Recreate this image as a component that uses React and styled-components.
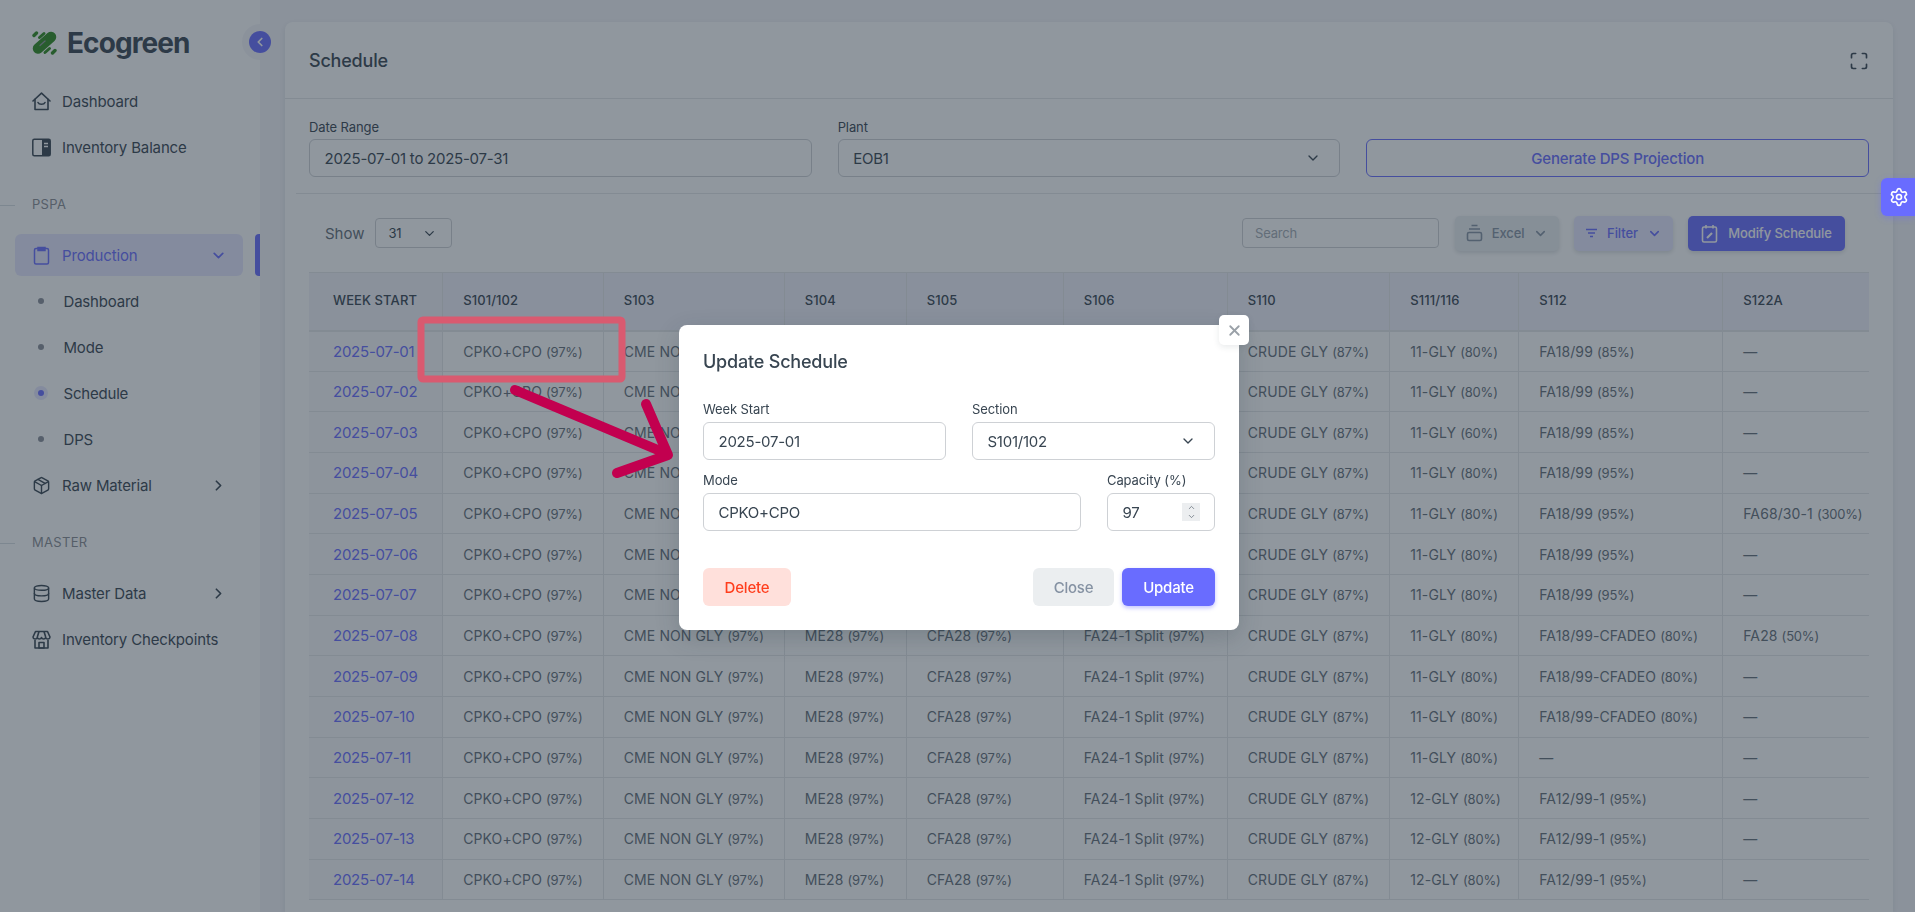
import React from 'react';
import styled, { createGlobalStyle } from 'styled-components';
import { ChevronDown, ChevronRight, ChevronLeft, ChevronUp, X, Settings, Package, Database, Maximize } from 'lucide-react';

const GlobalStyle = createGlobalStyle`
  html, body {
    margin: 0;
    height: 912px;
    overflow: hidden;
    background: #f5f5f9;
    font-family: Inter, "Noto Sans", sans-serif;
    color: #384551;
  }
  * {
    box-sizing: border-box;
  }
`;

const Page = styled.div`
  display: flex;
  width: 1915px;
  height: 912px;
  overflow: hidden;
`;

const Sidebar = styled.aside`
  position: relative;
  width: 260px;
  flex: none;
  background: #fff;
  padding-top: 28px;
`;

const Brand = styled.div`
  display: flex;
  align-items: center;
  gap: 10px;
  height: 29px;
  padding-left: 32px;
  font-size: 28px;
  font-weight: 700;
  letter-spacing: -0.9px;
  color: #384551;
`;

const Toggle = styled.div`
  position: absolute;
  left: 249px;
  top: 31px;
  width: 22px;
  height: 22px;
  border-radius: 50%;
  background: #696cff;
  color: #fff;
  display: flex;
  align-items: center;
  justify-content: center;
  box-shadow: 0 0 0 7px #f5f5f9;
`;

const Menu = styled.nav`
  padding-top: 23px;
  display: flex;
  flex-direction: column;
`;

const Item = styled.div`
  position: relative;
  display: flex;
  align-items: center;
  height: 42px;
  margin: 0 17px 4px 15px;
  padding: 0 16px 0 17px;
  border-radius: 6px;
  font-size: 15px;
  letter-spacing: -0.15px;
  color: ${(p) => (p.$active ? '#696cff' : '#384551')};
  background: ${(p) => (p.$active ? 'rgba(105,108,255,.16)' : 'transparent')};
  svg.lead {
    flex: none;
    margin-right: 11px;
  }
  svg.tail {
    margin-left: auto;
  }
  ${(p) =>
    p.$active &&
    `&::after {
      content: '';
      position: absolute;
      left: 240px;
      top: 0;
      width: 5px;
      height: 42px;
      border-radius: 4px 0 0 4px;
      background: #696cff;
    }`}
`;

const SubItem = styled.div`
  display: flex;
  align-items: center;
  height: 42px;
  margin-bottom: 4px;
  padding-left: 38px;
  font-size: 15px;
  letter-spacing: -0.2px;
  color: #384551;
`;

const Bullet = styled.span`
  width: 6px;
  height: 6px;
  margin-right: 19.5px;
  border-radius: 50%;
  background: ${(p) => (p.$active ? '#696cff' : '#8a8f99')};
  box-shadow: ${(p) => (p.$active ? '0 0 0 4px rgba(105,108,255,.16)' : 'none')};
`;

const SectionLabel = styled.div`
  position: relative;
  height: 20px;
  margin: 22px 0 20px;
  padding-left: 32px;
  font-size: 13px;
  line-height: 20px;
  letter-spacing: 0.3px;
  color: #8a8d93;
  &::before {
    content: '';
    position: absolute;
    left: 0;
    top: 11px;
    width: 15px;
    height: 1px;
    background: #d9dee3;
  }
`;

const Main = styled.main`
  flex: 1;
  min-width: 0;
  padding: 22px 22px 0 25px;
`;

const Card = styled.section`
  background: #fff;
  border-radius: 8px 8px 0 0;
  height: 890px;
  box-shadow: 0 2px 6px rgba(34, 48, 62, 0.1);
`;

const CardHeader = styled.header`
  display: flex;
  align-items: center;
  justify-content: space-between;
  height: 77px;
  padding: 1px 24px 0 24px;
  border-bottom: 1px solid #e4e6e8;
`;

const Title = styled.h5`
  margin: 0;
  font-size: 18px;
  font-weight: 500;
  letter-spacing: -0.2px;
`;

const FormRow = styled.div`
  display: grid;
  grid-template-columns: repeat(3, 1fr);
  gap: 26px;
  align-items: end;
  padding: 19px 24px 16px;
`;

const Field = styled.label`
  display: flex;
  flex-direction: column;
  gap: ${(p) => p.$gap || 3}px;
  min-width: 0;
`;

const FieldLabel = styled.span`
  font-size: 13px;
  line-height: 18px;
  letter-spacing: -0.1px;
  color: #384551;
`;

const Control = styled.div`
  display: flex;
  align-items: center;
  justify-content: space-between;
  height: 38px;
  padding: 0 ${(p) => (p.$select ? 18 : 14)}px 0 14.5px;
  border: 1px solid #ced1d5;
  border-radius: 6px;
  background: #fff;
  font-size: 15px;
  letter-spacing: -0.25px;
  color: #384551;
`;

const OutlineButton = styled.div`
  display: flex;
  align-items: center;
  justify-content: center;
  height: 38px;
  border: 1px solid #696cff;
  border-radius: 6px;
  color: #696cff;
  font-size: 15px;
  font-weight: 500;
  letter-spacing: -0.15px;
`;

const Divider = styled.div`
  height: 1px;
  margin-left: 11px;
  background: #e4e6e8;
`;

const Toolbar = styled.div`
  display: flex;
  align-items: center;
  height: 78px;
  padding: 0 48px 0 40px;
`;

const ShowLabel = styled.span`
  font-size: 15px;
  color: #646e78;
  margin-right: 10px;
`;

const SmallSelect = styled.div`
  display: flex;
  align-items: center;
  justify-content: space-between;
  width: 77px;
  height: 30px;
  padding: 0 14px 0 13px;
  border: 1px solid #ced1d5;
  border-radius: 4px;
  font-size: 13px;
  letter-spacing: -0.2px;
`;

const SearchBox = styled.div`
  display: flex;
  align-items: center;
  width: 197px;
  height: 30px;
  margin-left: auto;
  padding: 0 12px;
  border: 1px solid #ced1d5;
  border-radius: 4px;
  font-size: 13px;
  letter-spacing: -0.2px;
  color: #a4abb3;
`;

const ToolButton = styled.div`
  display: flex;
  align-items: center;
  justify-content: center;
  height: 35px;
  width: ${(p) => p.$width}px;
  margin-left: ${(p) => p.$gap}px;
  gap: ${(p) => p.$inner || 9}px;
  border-radius: 5px;
  font-size: 13px;
  font-weight: 500;
  letter-spacing: -0.1px;
  color: ${(p) => p.$color};
  background: ${(p) => p.$bg};
  box-shadow: 0 2px 4px rgba(34, 48, 62, 0.16);
`;

const TableWrap = styled.div`
  padding: 0 24px;
`;

const Table = styled.table`
  width: 1560px;
  table-layout: fixed;
  border-collapse: collapse;
  font-size: 14px;
  letter-spacing: 0.1px;
  color: #646e78;
`;

const Th = styled.th`
  height: 58px;
  padding: 0 0 3px ${(p) => (p.$first ? 24 : 20)}px;
  text-align: left;
  font-size: 13px;
  font-weight: 500;
  letter-spacing: 0.1px;
  color: #384551;
  background: ${(p) => (p.$first ? '#f2f2f8' : '#f1f1fb')};
  border-top: 1px solid #e4e6e8;
  border-bottom: 2px solid #e4e6e8;
  border-right: 1px solid #e4e6e8;
  &:last-child {
    border-right: 0;
  }
`;

const Td = styled.td`
  height: 40.67px;
  padding: 0 0 0 ${(p) => (p.$first ? 24 : 20)}px;
  white-space: nowrap;
  overflow: hidden;
  border-bottom: 1px solid #e4e6e8;
  border-right: 1px solid #e4e6e8;
  background: ${(p) => (p.$first ? '#f9f9fb' : '#fff')};
  &:last-child {
    border-right: 0;
  }
`;

const DateLink = styled.a`
  color: #696cff;
  font-size: 15px;
  letter-spacing: -0.25px;
`;

const Pct = styled.small`
  font-size: 13px;
  letter-spacing: -0.2px;
`;

const SettingsTab = styled.div`
  position: fixed;
  z-index: 30;
  right: 0;
  top: 178px;
  width: 34px;
  height: 38px;
  padding-left: 2px;
  display: flex;
  align-items: center;
  justify-content: center;
  color: #fff;
  background: #696cff;
  border-radius: 6px 0 0 6px;
  box-shadow: 0 2px 6px rgba(105, 108, 255, 0.4);
`;

const Backdrop = styled.div`
  position: fixed;
  inset: 0;
  z-index: 10;
  background: #22303e;
  opacity: 0.5;
`;

const ModalLayer = styled.div`
  position: fixed;
  inset: 0;
  z-index: 20;
  display: flex;
  justify-content: center;
  padding: 325px 0 0 3px;
`;

const Modal = styled.div`
  position: relative;
  width: 560px;
  height: 305px;
  padding: 24px;
  background: #fff;
  border-radius: 8px;
  box-shadow: 0 8px 24px rgba(34, 48, 62, 0.2);
`;

const CloseX = styled.div`
  position: absolute;
  right: -10px;
  top: -10px;
  width: 30px;
  height: 30px;
  display: flex;
  align-items: center;
  justify-content: center;
  color: #9aa1a8;
  background: #fff;
  border-radius: 5px;
  box-shadow: 0 2px 6px rgba(34, 48, 62, 0.1);
`;

const ModalTitle = styled.h5`
  margin: 0 0 25px;
  height: 26px;
  font-size: 18px;
  line-height: 26px;
  font-weight: 500;
  letter-spacing: -0.2px;
`;

const ModalRow = styled.div`
  display: grid;
  grid-template-columns: ${(p) => p.$cols};
  gap: 26px;
  margin-bottom: 11px;
`;

const Spinner = styled.span`
  display: flex;
  flex-direction: column;
  align-items: center;
  width: 18px;
  height: 18px;
  background: #eceef0;
  color: #646e78;
`;

const ModalFooter = styled.div`
  display: flex;
  align-items: center;
  gap: 8px;
  margin-top: 37px;
`;

const ModalButton = styled.div`
  display: flex;
  align-items: center;
  justify-content: center;
  width: ${(p) => p.$width}px;
  height: 38px;
  margin-right: ${(p) => (p.$push ? 'auto' : 0)};
  border-radius: 6px;
  font-size: 15px;
  font-weight: 500;
  letter-spacing: -0.2px;
  color: ${(p) => p.$color};
  background: ${(p) => p.$bg};
  box-shadow: ${(p) => p.$shadow || 'none'};
`;

const Annotation = styled.svg`
  position: fixed;
  z-index: 25;
  left: 0;
  top: 0;
  width: 1915px;
  height: 912px;
  pointer-events: none;
`;

const HomeIcon = () => (
  <svg className="lead" width="19" height="19" viewBox="0 0 19 19" fill="none" stroke="currentColor" strokeWidth="1.6" strokeLinejoin="round" strokeLinecap="round">
    <path d="M1 9 9.5 1.2 18 9" />
    <path d="M3 7.2V17.5h13V7.2" />
    <path d="M6 10.5c1 2.4 6 2.4 7 0" />
  </svg>
);

const BookIcon = () => (
  <svg className="lead" width="19" height="19" viewBox="0 0 19 19">
    <rect x="0.8" y="1.2" width="17.4" height="16.6" rx="1.5" fill="none" stroke="currentColor" strokeWidth="1.5" />
    <rect x="10" y="1.5" width="8" height="16" fill="currentColor" />
    <path d="M12 5.5h4M12 8.5h4" stroke="#fff" strokeWidth="1.3" />
  </svg>
);

const ClipIcon = () => (
  <svg className="lead" width="19" height="19" viewBox="0 0 19 19" fill="none" stroke="currentColor" strokeWidth="1.5">
    <rect x="2.5" y="2.5" width="14" height="15.5" rx="1.5" />
    <path d="M6 1.5h7v3H6z" fill="currentColor" />
  </svg>
);

const StoreIcon = () => (
  <svg className="lead" width="19" height="19" viewBox="0 0 19 19" fill="none" stroke="currentColor" strokeWidth="1.6" strokeLinejoin="round">
    <path d="M3.5 1.5h12l2.5 5.5a2.2 2.2 0 0 1-4.3.5 2.2 2.2 0 0 1-4.2 0 2.2 2.2 0 0 1-4.2 0A2.2 2.2 0 0 1 1 7z" />
    <path d="M7 1.5 5.3 7M12 1.5 13.7 7" />
    <path d="M3 10v8h13v-8" />
    <rect x="7" y="12.5" width="5" height="5.5" />
  </svg>
);

const LogoMark = () => (
  <svg width="25" height="24" viewBox="0 0 25 24" style={{ flex: 'none' }} fill="none" stroke="#2e8b1e" strokeLinecap="round">
    <path d="M6 17.5 19 6" strokeWidth="10.5" />
    <path d="M2 4.5 4.5 2" strokeWidth="3.4" />
    <path d="M7.5 6.5 12 2.5" strokeWidth="3" />
    <path d="M13 21.5 17.5 17.5" strokeWidth="3" />
    <path d="M20.5 22 23 19.5" strokeWidth="3.4" />
    <path d="M8 14.5 13 10" stroke="#8f969d" strokeWidth="1.2" />
  </svg>
);

const ExcelIcon = () => (
  <svg width="17" height="18" viewBox="0 0 17 18" fill="none" stroke="currentColor" strokeWidth="1.6">
    <path d="M5.5 1.5h6M3 5h11" />
    <rect x="1.5" y="8.5" width="14" height="8" rx="1.5" />
  </svg>
);

const ModifyIcon = () => (
  <svg width="17" height="19" viewBox="0 0 17 19" fill="none" stroke="currentColor" strokeWidth="1.6">
    <rect x="1.5" y="3" width="14" height="15" rx="1.5" />
    <path d="M5 1v3.5M12 1v3.5" />
    <path d="M6 14 11 9" strokeWidth="2.2" />
  </svg>
);

const columns = [
  { name: 'WEEK START', w: 133.7 },
  { name: 'S101/102', w: 160.6 },
  { name: 'S103', w: 181 },
  { name: 'S104', w: 122 },
  { name: 'S105', w: 157 },
  { name: 'S106', w: 164 },
  { name: 'S110', w: 162.5 },
  { name: 'S111/116', w: 129 },
  { name: 'S112', w: 204 },
  { name: 'S122A', w: 146.2 },
];

const gly = (day) => {
  if (day === 3) return ['11-GLY', '60%'];
  return day >= 12 ? ['12-GLY', '80%'] : ['11-GLY', '80%'];
};

const fa = (day) => {
  if (day <= 3) return ['FA18/99', '85%'];
  if (day <= 7) return ['FA18/99', '95%'];
  if (day <= 10) return ['FA18/99-CFADEO', '80%'];
  if (day === 11) return null;
  if (day <= 14) return ['FA12/99-1', '95%'];
  return null;
};

const last = (day) => {
  if (day === 5) return ['FA68/30-1', '300%'];
  if (day === 8) return ['FA28', '50%'];
  return null;
};

const rows = Array.from({ length: 14 }, (_, i) => {
  const day = i + 1;
  return {
    date: `2025-07-${String(day).padStart(2, '0')}`,
    cells: [
      ['CPKO+CPO', '97%'],
      ['CME NON GLY', '97%'],
      ['ME28', '97%'],
      ['CFA28', '97%'],
      ['FA24-1 Split', '97%'],
      ['CRUDE GLY', '87%'],
      gly(day),
      fa(day),
      last(day),
    ],
  };
});

const Value = ({ cell }) =>
  cell ? (
    <>
      {cell[0]} <Pct>({cell[1]})</Pct>
    </>
  ) : (
    '—'
  );

const App = () => (
  <>
    <GlobalStyle />
    <Page>
      <Sidebar>
        <Brand>
          <LogoMark />
          Ecogreen
        </Brand>
        <Toggle>
          <ChevronLeft size={14} strokeWidth={3} />
        </Toggle>
        <Menu>
          <Item>
            <HomeIcon />
            Dashboard
          </Item>
          <Item>
            <BookIcon />
            Inventory Balance
          </Item>
          <SectionLabel>PSPA</SectionLabel>
          <Item $active>
            <ClipIcon />
            Production
            <ChevronDown className="tail" size={17} strokeWidth={2.4} />
          </Item>
          <SubItem>
            <Bullet />
            Dashboard
          </SubItem>
          <SubItem>
            <Bullet />
            Mode
          </SubItem>
          <SubItem>
            <Bullet $active />
            Schedule
          </SubItem>
          <SubItem>
            <Bullet />
            DPS
          </SubItem>
          <Item>
            <Package className="lead" size={19} strokeWidth={1.8} />
            Raw Material
            <ChevronRight className="tail" size={17} strokeWidth={2.4} />
          </Item>
          <SectionLabel>MASTER</SectionLabel>
          <Item>
            <Database className="lead" size={19} strokeWidth={1.8} />
            Master Data
            <ChevronRight className="tail" size={17} strokeWidth={2.4} />
          </Item>
          <Item>
            <StoreIcon />
            Inventory Checkpoints
          </Item>
        </Menu>
      </Sidebar>
      <Main>
        <Card>
          <CardHeader>
            <Title>Schedule</Title>
            <Maximize size={20} strokeWidth={2} />
          </CardHeader>
          <FormRow>
            <Field>
              <FieldLabel>Date Range</FieldLabel>
              <Control>2025-07-01 to 2025-07-31</Control>
            </Field>
            <Field>
              <FieldLabel>Plant</FieldLabel>
              <Control $select>
                EOB1
                <ChevronDown size={16} />
              </Control>
            </Field>
            <OutlineButton>Generate DPS Projection</OutlineButton>
          </FormRow>
          <Divider />
          <Toolbar>
            <ShowLabel>Show</ShowLabel>
            <SmallSelect>
              31
              <ChevronDown size={15} />
            </SmallSelect>
            <SearchBox>Search</SearchBox>
            <ToolButton $width={104} $gap={16} $color="#8592a3" $bg="#ebeef0">
              <ExcelIcon />
              Excel
              <ChevronDown size={15} strokeWidth={2.5} />
            </ToolButton>
            <ToolButton $width={99} $gap={15} $color="#696cff" $bg="#e7e7ff">
              <svg width="13" height="10" viewBox="0 0 13 10" fill="none" stroke="currentColor" strokeWidth="1.4">
                <path d="M1 1.5h11M3 5h7M5 8.5h3" />
              </svg>
              Filter
              <ChevronDown size={15} strokeWidth={2.5} />
            </ToolButton>
            <ToolButton $width={157} $gap={15} $inner={10} $color="#fff" $bg="#696cff">
              <ModifyIcon />
              Modify Schedule
            </ToolButton>
          </Toolbar>
          <TableWrap>
            <Table>
              <colgroup>
                {columns.map((c) => (
                  <col key={c.name} style={{ width: c.w }} />
                ))}
              </colgroup>
              <thead>
                <tr>
                  {columns.map((c, i) => (
                    <Th key={c.name} $first={i === 0}>
                      {c.name}
                    </Th>
                  ))}
                </tr>
              </thead>
              <tbody>
                {rows.map((r) => (
                  <tr key={r.date}>
                    <Td $first>
                      <DateLink>{r.date}</DateLink>
                    </Td>
                    {r.cells.map((cell, i) => (
                      <Td key={i}>
                        <Value cell={cell} />
                      </Td>
                    ))}
                  </tr>
                ))}
              </tbody>
            </Table>
          </TableWrap>
        </Card>
      </Main>
    </Page>
    <SettingsTab>
      <Settings size={20} />
    </SettingsTab>
    <Backdrop />
    <ModalLayer>
      <Modal>
        <CloseX>
          <X size={17} strokeWidth={2.6} />
        </CloseX>
        <ModalTitle>Update Schedule</ModalTitle>
        <ModalRow $cols="1fr 1fr">
          <Field $gap={4}>
            <FieldLabel>Week Start</FieldLabel>
            <Control>2025-07-01</Control>
          </Field>
          <Field $gap={4}>
            <FieldLabel>Section</FieldLabel>
            <Control $select>
              S101/102
              <ChevronDown size={16} />
            </Control>
          </Field>
        </ModalRow>
        <ModalRow $cols="1fr 108px">
          <Field $gap={4}>
            <FieldLabel>Mode</FieldLabel>
            <Control>CPKO+CPO</Control>
          </Field>
          <Field $gap={4}>
            <FieldLabel>Capacity (%)</FieldLabel>
            <Control>
              97
              <Spinner>
                <ChevronUp size={9} />
                <ChevronDown size={9} />
              </Spinner>
            </Control>
          </Field>
        </ModalRow>
        <ModalFooter>
          <ModalButton $width={88} $push $color="#ff3e1d" $bg="#ffe0db">
            Delete
          </ModalButton>
          <ModalButton $width={81} $color="#8592a3" $bg="#ebeef0">
            Close
          </ModalButton>
          <ModalButton $width={93} $color="#fff" $bg="#696cff" $shadow="0 2px 4px rgba(105,108,255,.4)">
            Update
          </ModalButton>
        </ModalFooter>
      </Modal>
    </ModalLayer>
    <Annotation viewBox="0 0 1915 912">
      <rect x="421" y="320" width="201" height="59" rx="2" fill="none" stroke="#d95a70" strokeWidth="7" />
      <g fill="none" stroke="#c2004f" strokeWidth="10" strokeLinecap="round" strokeLinejoin="round">
        <path d="M515 390 665 453" />
        <path d="M646 404 668 455 617 473" />
      </g>
    </Annotation>
  </>
);

export default App;
